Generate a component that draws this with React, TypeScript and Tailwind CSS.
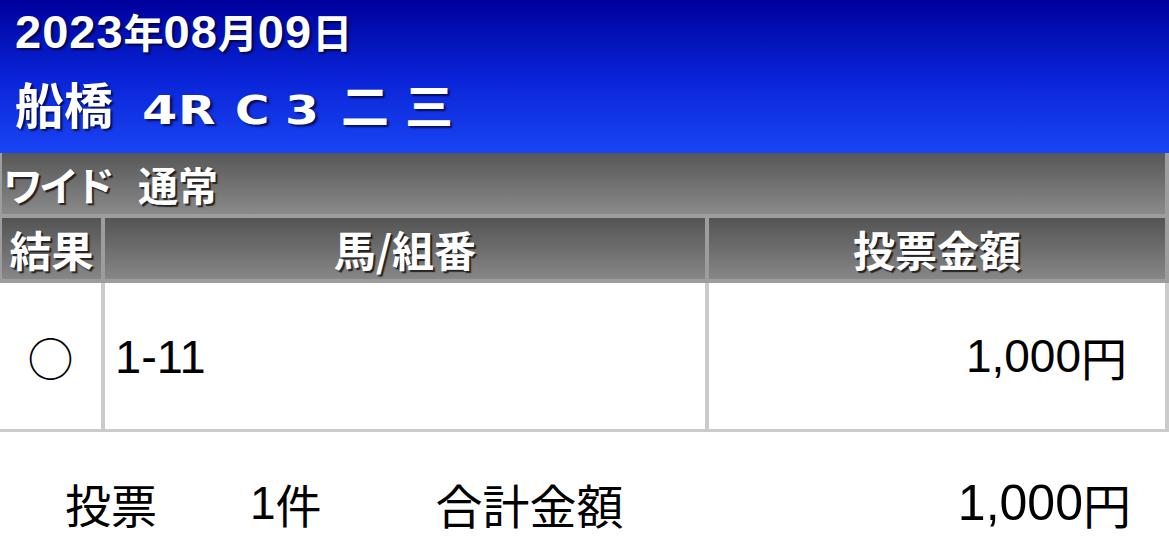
import React from "react";

const sans = "font-['Liberation_Sans','Noto_Sans_CJK_JP',sans-serif]";
const cjk = "font-['Noto_Sans_CJK_JP',sans-serif]";
const wide = "font-['DejaVu_Sans',sans-serif]";
const shadowBlue = "[text-shadow:2px_2px_2px_rgba(0,0,40,0.75)]";
const shadowGray = "[text-shadow:2px_2px_1px_rgba(20,20,20,0.85)]";

export default function App() {
  return (
    <div className={`w-[1169px] h-[550px] bg-white overflow-hidden ${sans}`}>
      {/* Blue header */}
      <div className="h-[153px] bg-gradient-to-b from-[#00009c] via-[#0a22d6] to-[#1a44f4] pl-[15px] pt-[8px] text-white font-bold">
        <div className={`flex items-baseline h-[50px] ${shadowBlue}`}>
          <span className="text-[47px] leading-none tracking-[1px]">2023</span>
          <span className={`${cjk} text-[40px] leading-none`}>年</span>
          <span className="text-[47px] leading-none tracking-[1px]">08</span>
          <span className={`${cjk} text-[40px] leading-none`}>月</span>
          <span className="text-[47px] leading-none tracking-[1px]">09</span>
          <span className={`${cjk} text-[40px] leading-none`}>日</span>
        </div>
        <div className={`flex items-baseline mt-[20px] ${shadowBlue}`}>
          <span className={`${cjk} text-[49px] leading-none`}>船橋</span>
          <span className={`ml-[29px] inline-block w-[36px] origin-left scale-x-[1.3] text-[39px] leading-none ${wide}`}>4</span>
          <span className={`inline-block w-[57px] origin-left scale-x-[1.25] text-[39px] leading-none ${wide}`}>R</span>
          <span className={`inline-block w-[50px] origin-left scale-x-[1.2] text-[39px] leading-none ${wide}`}>C</span>
          <span className={`inline-block w-[56px] origin-left scale-x-[1.25] text-[39px] leading-none ${wide}`}>3</span>
          <span className={`${cjk} text-[48px] leading-none`}>二</span>
          <span className={`${cjk} ml-[16px] text-[48px] leading-none`}>三</span>
        </div>
      </div>

      {/* Gray header rows */}
      <div className="bg-[#9d9d9d] pl-[2px] pr-[4px] pb-[4px]">
        <div className={`h-[61px] bg-gradient-to-b from-[#575757] to-[#8a8a8a] flex items-center pl-[1px] text-white font-bold ${cjk} ${shadowGray}`}>
          <span className="text-[40px] leading-none tracking-[-4px]">ワイド</span>
          <span className="ml-[27px] text-[40px] leading-none">通常</span>
        </div>
        <div className={`mt-[4px] h-[61px] flex gap-[4px] text-white font-bold ${cjk} ${shadowGray}`}>
          <div className="w-[99px] bg-gradient-to-b from-[#545454] to-[#878787] flex items-center justify-center text-[42px] leading-none">
            結果
          </div>
          <div className="w-[600px] bg-gradient-to-b from-[#545454] to-[#878787] flex items-center justify-center text-[42px] leading-none">
            馬/組番
          </div>
          <div className="flex-1 bg-gradient-to-b from-[#545454] to-[#878787] flex items-center justify-center text-[42px] leading-none">
            投票金額
          </div>
        </div>
      </div>

      {/* Data row */}
      <div className="bg-[#cbcbcb] pr-[4px] pb-[3px]">
        <div className="h-[146px] flex gap-[4px] text-black">
          <div className={`w-[101px] bg-white flex items-center justify-center ${cjk} text-[46px] leading-none`}>
            ○
          </div>
          <div className="w-[600px] bg-white flex items-center pl-[10px] text-[47px] leading-none">
            1-11
          </div>
          <div className="flex-1 bg-white flex items-center justify-end pr-[38px] text-[46px] leading-none">
            <span>1,000</span>
            <span className={cjk}>円</span>
          </div>
        </div>
      </div>

      {/* Summary */}
      <div className="flex items-center h-[118px] text-black text-[46px] leading-none pt-[24px]">
        <span className={`${cjk} ml-[65px]`}>投票</span>
        <span className="ml-[93px]">1</span>
        <span className={cjk}>件</span>
        <span className={`${cjk} ml-[114px] text-[47px]`}>合計金額</span>
        <span className="ml-auto text-[50px]">1,000</span>
        <span className={`${cjk} text-[48px] mr-[38px]`}>円</span>
      </div>
    </div>
  );
}
